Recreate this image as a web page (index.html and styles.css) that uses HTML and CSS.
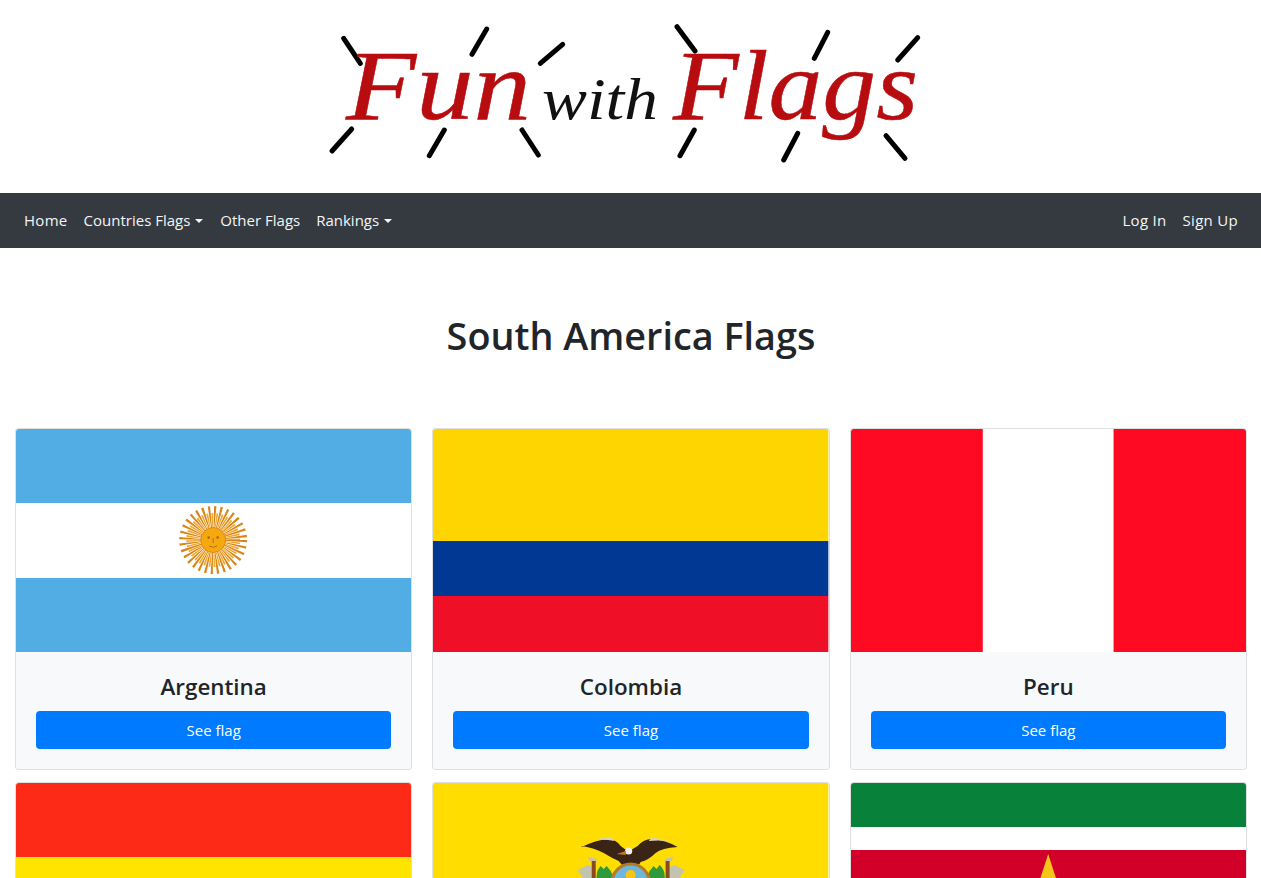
FILE: index.html
```html
<!DOCTYPE html>
<html lang="en">
<head>
<meta charset="utf-8">
<title>South America Flags</title>
<link rel="stylesheet" href="styles.css">
</head>
<body>
<div class="page">
  <header class="banner">
    <svg class="logo" viewBox="325 0 610 193" role="img" aria-label="Fun with Flags">
      <g class="rays">
        <line x1="342.7" y1="38.3" x2="359.3" y2="63.3"/>
        <line x1="485.7" y1="29" x2="471" y2="54.3"/>
        <line x1="561.7" y1="44.3" x2="539.3" y2="63.3"/>
        <line x1="350.7" y1="129" x2="331" y2="151"/>
        <line x1="443.3" y1="130" x2="428.3" y2="155.7"/>
        <line x1="521" y1="130" x2="537.3" y2="155"/>
        <line x1="676" y1="26.7" x2="694" y2="51"/>
        <line x1="826.7" y1="32.3" x2="813.3" y2="58.3"/>
        <line x1="916.7" y1="37.7" x2="896.7" y2="60"/>
        <line x1="693.3" y1="130" x2="679" y2="155.7"/>
        <line x1="796.7" y1="133.3" x2="782.7" y2="160"/>
        <line x1="885" y1="135.7" x2="904" y2="158.3"/>
      </g>
      <text class="logo-red" x="345" y="119" textLength="185" lengthAdjust="spacingAndGlyphs">Fun</text>
      <text class="logo-black" x="541" y="119" textLength="116" lengthAdjust="spacingAndGlyphs">with</text>
      <text class="logo-red" x="672" y="119" textLength="245" lengthAdjust="spacingAndGlyphs">Flags</text>
    </svg>
  </header>

  <nav class="navbar">
    <ul class="nav-group">
      <li><a class="nav-link nav-link-wide" href="#">Home</a></li>
      <li><a class="nav-link caret" href="#">Countries Flags</a></li>
      <li><a class="nav-link" href="#">Other Flags</a></li>
      <li><a class="nav-link caret" href="#">Rankings</a></li>
    </ul>
    <ul class="nav-group">
      <li><a class="nav-link nav-link-wide" href="#">Log In</a></li>
      <li><a class="nav-link nav-link-wide" href="#">Sign Up</a></li>
    </ul>
  </nav>

  <main class="content">
    <h1 class="title">South America Flags</h1>
    <section class="grid">

      <article class="card">
        <svg class="flag" viewBox="0 0 396 223" preserveAspectRatio="none" aria-hidden="true">
          <rect width="396" height="223" fill="#51ade3"/>
          <rect y="74" width="396" height="75" fill="#fff"/>
          <circle class="ray-long" cx="197.5" cy="111" r="23"/>
          <circle class="ray-short" cx="197.5" cy="111" r="20"/>
          <circle cx="197.5" cy="111" r="12.5" fill="#f6a90f" stroke="#d9851a" stroke-width="1"/>
          <circle cx="193" cy="108.5" r="1.3" fill="#a8661a"/>
          <circle cx="202" cy="108.5" r="1.3" fill="#a8661a"/>
          <path d="M197.5 109v5M193.5 117q4 2.500 8 0" fill="none" stroke="#b8701a" stroke-width="1"/>
        </svg>
        <div class="card-footer">
          <h2 class="card-name">Argentina</h2>
          <a class="btn" href="#">See flag</a>
        </div>
      </article>

      <article class="card">
        <svg class="flag" viewBox="0 0 396 223" preserveAspectRatio="none" aria-hidden="true">
          <rect width="396" height="112" fill="#ffd500"/>
          <rect y="112" width="396" height="55" fill="#003893"/>
          <rect y="167" width="396" height="56" fill="#ef0f27"/>
        </svg>
        <div class="card-footer">
          <h2 class="card-name">Colombia</h2>
          <a class="btn" href="#">See flag</a>
        </div>
      </article>

      <article class="card">
        <svg class="flag" viewBox="0 0 396 223" preserveAspectRatio="none" aria-hidden="true">
          <rect width="396" height="223" fill="#ff0a22"/>
          <rect x="132" width="131" height="223" fill="#fff"/>
        </svg>
        <div class="card-footer">
          <h2 class="card-name">Peru</h2>
          <a class="btn" href="#">See flag</a>
        </div>
      </article>

      <article class="card">
        <svg class="flag" viewBox="0 0 396 223" preserveAspectRatio="none" aria-hidden="true">
          <rect width="396" height="74" fill="#fc2a17"/>
          <rect y="74" width="396" height="75" fill="#ffe400"/>
          <rect y="149" width="396" height="74" fill="#007a33"/>
        </svg>
      </article>

      <article class="card">
        <svg class="flag" viewBox="0 0 396 223" preserveAspectRatio="none" aria-hidden="true">
          <rect width="396" height="112" fill="#ffdd00"/>
          <rect y="112" width="396" height="55" fill="#034ea2"/>
          <rect y="167" width="396" height="56" fill="#ed1c24"/>
          <path d="M145 87l10-5 5 2v11h-10zM252 87l-10-5-5 2v11h10z" fill="#c4c4ae"/>
          <path d="M155 74l9 2v3l-7-1zM241 74l-9 2v3l7-1z" fill="#c4c4ae"/>
          <path d="M159 78h4v18h-4zM233 78h4v18h-4z" fill="#8a4a20"/>
          <path d="M164 96q-1-8 4-13l3 3 3-3 4 5 4 8zM232 96q1-9-5-14l-3 4-3-3-4 5-4 8z" fill="#2f9a3a"/>
          <path d="M149 64q14-7 26-8 8 0 13 7l4 3h8l5-3q6-7 14-7 14 1 26 8-16 1-22 6-7 7-15 9l-3 5 1 6h-14l-1-6-5-6q-7-3-15-8-9-5-22-7z" fill="#3a2416"/>
          <path d="M162 57q10-3 17-2l3 3q-10-2-20-1zM236 58q-10-3-17-3l-3 3q10-1 20 0z" fill="#d9d3bd"/>
          <circle cx="196" cy="68" r="3.600" fill="#f2efe4"/>
          <path d="M193 68l-9 3 9 1z" fill="#c47a20"/>
          <circle cx="198" cy="100" r="19" fill="#6fb7d8" stroke="#b07b2a" stroke-width="3"/>
          <circle cx="198" cy="92" r="5" fill="#f6c518"/>
        </svg>
      </article>

      <article class="card">
        <svg class="flag" viewBox="0 0 396 223" preserveAspectRatio="none" aria-hidden="true">
          <rect width="396" height="223" fill="#08813b"/>
          <rect y="44" width="396" height="135" fill="#fff"/>
          <rect y="67" width="396" height="89" fill="#d20029"/>
          <path d="M197.500 71L221.600 145.200 158.500 99.300H236.500L173.400 145.200z" fill="#f7c41a"/>
        </svg>
      </article>

    </section>
  </main>
</div>
</body>
</html>
```

FILE: styles.css
```css
* { box-sizing: border-box; }

html, body {
  margin: 0;
  padding: 0;
}

body {
  font-family: "Open Sans", "Noto Sans", "Liberation Sans", sans-serif;
  font-size: 16px;
  line-height: 1.5;
  color: #212529;
  background: #fff;
}

.page {
  height: 100vh;
  overflow: hidden;
}

.banner {
  height: 193px;
  display: flex;
  justify-content: center;
}

.logo {
  width: 610px;
  height: 193px;
  display: block;
}

.rays line {
  stroke: #000;
  stroke-width: 5;
  stroke-linecap: round;
}

.logo-red,
.logo-black {
  font-family: "Liberation Serif", serif;
  font-style: italic;
}

.logo-red {
  font-size: 100px;
  fill: #b80d10;
  stroke: #b80d10;
  stroke-width: 0.5;
}

.logo-black {
  font-size: 60px;
  fill: #111;
}

.navbar {
  height: 55px;
  background: #343a40;
  padding: 0 15px 0 16px;
  display: flex;
  align-items: center;
  justify-content: space-between;
}

.nav-group {
  list-style: none;
  margin: 0;
  padding: 0;
  display: flex;
}

.nav-link {
  display: block;
  padding: 8px;
  color: #f4f5f6;
  font-size: 15px;
  text-decoration: none;
}

.nav-link-wide {
  letter-spacing: 0.3px;
}

.caret::after {
  content: "";
  display: inline-block;
  margin-left: 5px;
  margin-right: 1px;
  vertical-align: 3px;
  border-top: 4.5px solid;
  border-left: 4.5px solid transparent;
  border-right: 4.5px solid transparent;
}

.content {
  padding: 64px 14px 0 15px;
}

.title {
  margin: 0 0 68px;
  font-size: 37.8px;
  font-weight: 600;
  line-height: 48px;
  text-align: center;
}

.grid {
  display: grid;
  grid-template-columns: repeat(3, 1fr);
  column-gap: 20px;
  row-gap: 12px;
}

.card {
  border: 1px solid rgba(0, 0, 0, 0.125);
  border-radius: 4px;
  overflow: hidden;
  background: #fff;
}

.flag {
  display: block;
  width: 100%;
  height: 223px;
}

.ray-long {
  fill: none;
  stroke: #d9851a;
  stroke-width: 22;
  stroke-dasharray: 1.6 2.916;
}

.ray-short {
  fill: none;
  stroke: #f0a92a;
  stroke-width: 14;
  stroke-dasharray: 1.4 2.527;
  stroke-dashoffset: 2;
}

.card-footer {
  background: #f8f9fa;
  padding: 20px;
  text-align: center;
}

.card-name {
  margin: 0 0 10px;
  font-size: 22.4px;
  font-weight: 600;
  line-height: 29px;
}

.btn {
  display: block;
  height: 38px;
  padding: 8px 12px 6px;
  border-radius: 4px;
  background: #007bff;
  color: #fff;
  font-size: 15px;
  text-decoration: none;
}
```
